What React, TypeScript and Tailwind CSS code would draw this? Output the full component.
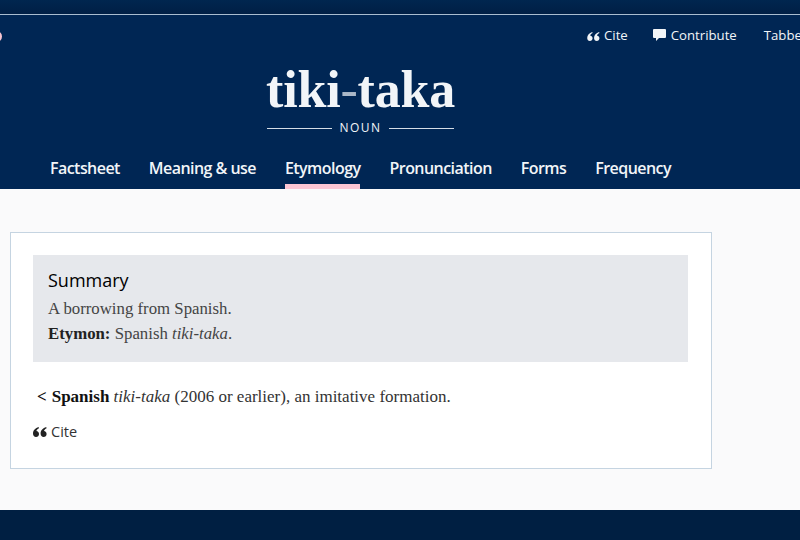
function QuoteIcon({ className }: { className: string }) {
  return (
    <svg viewBox="0 0 14 10" className={className} fill="currentColor">
      <path d="M5.6 0 C2.4 1 0 3.4 0 6.6 C0 8.6 1.3 10 3 10 C4.7 10 6 8.7 6 7 C6 5.4 4.8 4.2 3.4 4.1 C3.6 2.8 4.6 1.8 6 1.2 Z" />
      <path d="M13.2 0 C10 1 7.6 3.4 7.6 6.6 C7.6 8.6 8.9 10 10.6 10 C12.3 10 13.6 8.7 13.6 7 C13.6 5.4 12.4 4.2 11 4.1 C11.2 2.8 12.2 1.8 13.6 1.2 Z" />
    </svg>
  );
}

function CommentIcon({ className }: { className: string }) {
  return (
    <svg viewBox="0 0 13 12" className={className} fill="currentColor">
      <path d="M1 0 H12 A1 1 0 0 1 13 1 V8 A1 1 0 0 1 12 9 H6 L3 12 V9 H1 A1 1 0 0 1 0 8 V1 A1 1 0 0 1 1 0 Z" />
    </svg>
  );
}

const tabs = ["Factsheet", "Meaning & use", "Etymology", "Pronunciation", "Forms", "Frequency"];

export default function App() {
  return (
    <div className="flex h-[540px] w-[800px] flex-col overflow-hidden bg-[#fafafb] font-['Open_Sans',sans-serif]">
      <div className="h-[14px] bg-gradient-to-b from-[#00264f] to-[#001f45]" />

      <header className="relative h-[175px] border-t border-[#a9bdd0] bg-[#002654] text-[#f2f5f8]">
        <div className="absolute top-[16px] -left-[9px] h-[11px] w-[11px] rounded-full border-2 border-[#f7c5d0]" />

        <div className="flex h-[42px] items-center whitespace-nowrap pl-[587px] text-[13.2px]">
          <QuoteIcon className="h-[9px] w-[13px] shrink-0" />
          <span className="ml-[4px]">Cite</span>
          <CommentIcon className="mb-[3px] ml-[25px] h-[12px] w-[13px] shrink-0" />
          <span className="ml-[5px]">Contribute</span>
          <span className="ml-[27px]">Tabbed</span>
        </div>

        <div className="ml-[267px] flex w-[187px] flex-col items-center">
          <h1 className="mt-[7px] h-[51px] font-['Liberation_Serif',serif] text-[52px] leading-[51px] font-bold tracking-[-0.2px] whitespace-nowrap">
            tiki<span className="font-normal opacity-70">-</span>taka
          </h1>
          <div className="mt-[6px] flex w-full items-center gap-[7px] text-[12px] leading-[14px] tracking-[1.5px]">
            <div className="h-px flex-1 bg-[#d5dde6]" />
            NOUN
            <div className="h-px flex-1 bg-[#d5dde6]" />
          </div>
        </div>

        <nav className="mt-[19px] flex gap-[29px] pl-[50px] text-[16px] font-semibold tracking-[-0.55px]">
          {tabs.map((tab) => (
            <div
              key={tab}
              className={
                tab === "Etymology"
                  ? "h-[35px] border-b-[5px] border-[#fcc6d4] pt-[2px]"
                  : "h-[35px] pt-[2px]"
              }
            >
              {tab}
            </div>
          ))}
        </nav>
      </header>

      <main className="flex-1 pt-[43px] pl-[10px]">
        <div className="h-[237px] w-[702px] border border-[#c5d4e1] bg-white pt-[22px] pl-[22px]">
          <div className="h-[107px] w-[655px] bg-[#e6e8ec] pt-[13px] pl-[15px]">
            <h2 className="text-[18px] leading-[24px] font-medium text-black">Summary</h2>
            <p className="mt-[4px] font-['Liberation_Serif',serif] text-[16.8px] leading-[25px] text-[#444]">
              A borrowing from Spanish.
            </p>
            <p className="font-['Liberation_Serif',serif] text-[16.8px] leading-[25px] text-[#444]">
              <b className="text-[#222]">Etymon:</b> Spanish <i>tiki-taka</i>.
            </p>
          </div>
          <p className="mt-[22px] pl-[4px] font-['Liberation_Serif',serif] text-[17px] leading-[26px] text-[#333]">
            <b className="mr-[5px] text-[#111]">&lt;</b>
            <b className="text-[#111]">Spanish</b> <i>tiki-taka</i> (2006 or earlier), an imitative formation.
          </p>
          <div className="mt-[12px] flex items-center text-[14.5px] leading-[20px] text-[#333]">
            <QuoteIcon className="h-[10px] w-[14px] shrink-0 text-[#222]" />
            <span className="ml-[4px]">Cite</span>
          </div>
        </div>
      </main>

      <footer className="h-[30px] bg-[#001f42]" />
    </div>
  );
}
